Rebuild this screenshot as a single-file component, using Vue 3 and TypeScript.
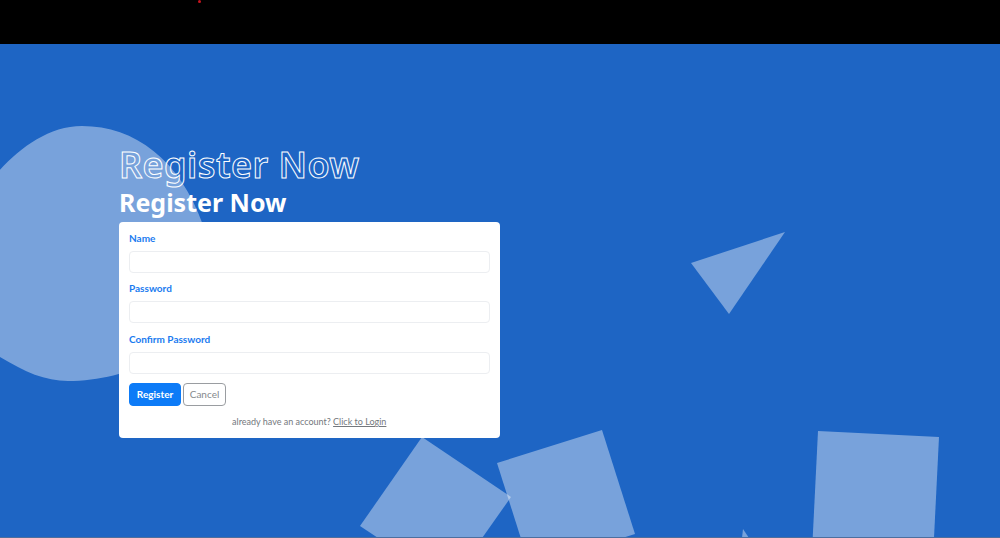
<script setup lang="ts">
interface Field { label: string; type: string }
const fields: Field[] = [
  { label: 'Name', type: 'text' },
  { label: 'Password', type: 'password' },
  { label: 'Confirm Password', type: 'password' },
]
</script>

<template>
  <div class="page">
    <header class="topbar"><span class="dot"></span></header>
    <main class="hero">
      <svg class="shapes" viewBox="0 44 1000 494" aria-hidden="true">
        <path d="M-30 210 C-12 180 30 126 82 126 C135 126 180 160 203 225 L205 300 C190 350 130 381 68 381 C45 381 25 372 0 357 L-30 340 Z" />
        <polygon points="785,232 691,263 729,314" />
        <polygon points="422,437 511,497 449,585 360,526" />
        <polygon points="497,463 602,430 635,534 530,567" />
        <polygon points="818,431 939,437 933,558 812,552" />
        <polygon points="743,529 749,538 742,538" />
      </svg>
      <section class="content">
        <h1 class="outline">Register Now</h1>
        <h2 class="title">Register Now</h2>
        <form class="card" @submit.prevent>
          <div v-for="f in fields" :key="f.label" class="field">
            <label class="label">{{ f.label }}</label>
            <input class="input" :type="f.type" />
          </div>
          <div class="actions">
            <button class="btn primary" type="submit">Register</button>
            <button class="btn ghost" type="button">Cancel</button>
          </div>
          <p class="foot">already have an account? <a href="#" class="link">Click to Login</a></p>
        </form>
      </section>
    </main>
  </div>
</template>

<style>
html, body { margin: 0; background: #000; }
</style>

<style scoped>
.page {
  width: 1000px;
  height: 538px;
  display: flex;
  flex-direction: column;
  overflow: hidden;
  font-family: Lato, "Noto Sans", sans-serif;
}
.topbar {
  height: 44px;
  flex: none;
  background: #000;
  position: relative;
}
.dot {
  position: absolute;
  left: 198px;
  top: 0;
  width: 3px;
  height: 3px;
  border-radius: 50%;
  background: #c8141e;
}
.hero {
  flex: 1;
  position: relative;
  background: #1e65c4;
  border-bottom: 1px solid #4d6f9e;
  overflow: hidden;
}
.shapes {
  position: absolute;
  left: 0;
  top: 0;
  width: 1000px;
  height: 494px;
}
.shapes path, .shapes polygon { fill: rgba(255, 255, 255, 0.4); }
.content {
  position: relative;
  width: 380.5px;
  margin-left: 119px;
  padding-top: 101px;
}
.outline {
  margin: 0;
  font-family: "Noto Sans", sans-serif;
  font-size: 36px;
  line-height: 40px;
  font-weight: 600;
  letter-spacing: 0.45px;
  color: transparent;
  -webkit-text-stroke: 1px #fff;
  white-space: nowrap;
}
.title {
  margin: 0;
  font-family: "Noto Sans", sans-serif;
  font-size: 25px;
  line-height: 37px;
  font-weight: 700;
  color: #fff;
  white-space: nowrap;
  position: relative;
  top: -1px;
}
.card {
  background: #fff;
  border-radius: 4px;
  height: 216px;
  box-sizing: border-box;
  padding: 10px;
  display: flex;
  flex-direction: column;
}
.field { margin-bottom: 9.3px; }
.label {
  display: block;
  font-size: 10px;
  line-height: 13px;
  font-weight: 700;
  color: #1a7bf0;
  margin-bottom: 6px;
}
.input {
  display: block;
  width: 100%;
  height: 22px;
  box-sizing: border-box;
  border: 1px solid #eceef1;
  border-radius: 4px;
  background: #fff;
  outline: none;
}
.actions { display: flex; gap: 2px; margin-top: 0.5px; }
.btn {
  height: 22.5px;
  box-sizing: border-box;
  border-radius: 4px;
  font-family: inherit;
  padding: 0 0 1px;
}
.primary {
  width: 52px;
  background: #0d7bf7;
  border: 1px solid #0d7bf7;
  color: #fff;
  font-size: 10px;
  font-weight: 700;
}
.ghost {
  width: 43px;
  background: #fff;
  border: 1px solid #9a9da1;
  color: #85898d;
  font-size: 10px;
}
.foot {
  margin: 9px 0 0;
  text-align: center;
  font-size: 9px;
  line-height: 13px;
  color: #74787d;
}
.link { color: #74787d; text-decoration: underline; }
</style>
